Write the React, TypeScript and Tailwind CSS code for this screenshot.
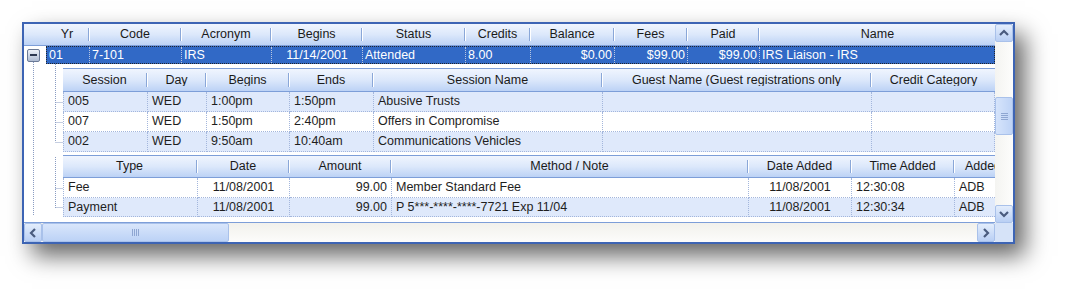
import React from 'react';

type Col = { label: string; w: string; align?: 'left' | 'right' | 'center' };

const MAIN_COLS: Col[] = [
  { label: 'Yr', w: 'w-[44px]' },
  { label: 'Code', w: 'w-[92px]' },
  { label: 'Acronym', w: 'w-[90px]' },
  { label: 'Begins', w: 'w-[91px]', align: 'center' },
  { label: 'Status', w: 'w-[103px]' },
  { label: 'Credits', w: 'w-[65px]' },
  { label: 'Balance', w: 'w-[84px]', align: 'right' },
  { label: 'Fees', w: 'w-[73px]', align: 'right' },
  { label: 'Paid', w: 'w-[72px]', align: 'right' },
  { label: 'Name', w: 'w-[235px]' },
];

const MAIN_ROW = ['01', '7-101', 'IRS', '11/14/2001', 'Attended', '8.00', '$0.00', '$99.00', '$99.00', 'IRS Liaison - IRS'];

const SESSION_COLS: Col[] = [
  { label: 'Session', w: 'w-[85px]' },
  { label: 'Day', w: 'w-[59px]' },
  { label: 'Begins', w: 'w-[83px]' },
  { label: 'Ends', w: 'w-[84px]' },
  { label: 'Session Name', w: 'w-[229px]' },
  { label: 'Guest Name (Guest registrations only', w: 'w-[269px]' },
  { label: 'Credit Category', w: 'w-[123px]' },
];

const SESSIONS = [
  ['005', 'WED', '1:00pm', '1:50pm', 'Abusive Trusts', '', ''],
  ['007', 'WED', '1:50pm', '2:40pm', 'Offers in Compromise', '', ''],
  ['002', 'WED', '9:50am', '10:40am', 'Communications Vehicles', '', ''],
];

const PAY_COLS: Col[] = [
  { label: 'Type', w: 'w-[135px]' },
  { label: 'Date', w: 'w-[92px]', align: 'center' },
  { label: 'Amount', w: 'w-[102px]', align: 'right' },
  { label: 'Method / Note', w: 'w-[357px]' },
  { label: 'Date Added', w: 'w-[103px]', align: 'center' },
  { label: 'Time Added', w: 'w-[103px]' },
  { label: 'Added By', w: 'w-[74px]' },
];

const PAYMENTS = [
  ['Fee', '11/08/2001', '99.00', 'Member Standard Fee', '11/08/2001', '12:30:08', 'ADB'],
  ['Payment', '11/08/2001', '99.00', 'P 5***-****-****-7721 Exp 11/04', '11/08/2001', '12:30:34', 'ADB'],
];

const alignClass = (a?: string) =>
  a === 'right' ? 'justify-end' : a === 'center' ? 'justify-center' : 'justify-start';

const HeaderRow = ({ cols, height, lead }: { cols: Col[]; height: string; lead?: boolean }) => (
  <div
    className={`flex shrink-0 ${height} bg-gradient-to-b from-[#f0f5fe] via-[#dce8fb] to-[#bcd2f5] border-b border-[#7d9ed8] text-[#1a1a1a]`}
  >
    {lead && <div className="w-[22px] shrink-0" />}
    {cols.map((c, i) => (
      <div key={i} className={`${c.w} shrink-0 flex items-center overflow-hidden`}>
        <span className="flex-1 text-center whitespace-nowrap overflow-hidden">{c.label}</span>
        {i < cols.length - 1 && (
          <span className="self-stretch my-[4px] w-[2px] shrink-0 border-l border-[#8aa7d8] border-r border-r-white" />
        )}
      </div>
    ))}
  </div>
);

const DataRow = ({ cols, cells, shaded, height }: { cols: Col[]; cells: string[]; shaded: boolean; height: string }) => (
  <div className={`flex shrink-0 ${height} ${shaded ? 'bg-[#dfe9fb]' : 'bg-white'} text-[#1e1e1e]`}>
    {cols.map((c, i) => (
      <div
        key={i}
        className={`${c.w} shrink-0 flex items-center px-[4px] whitespace-nowrap overflow-hidden border-b border-r border-dotted border-[#a3b6dc] ${
          i === 0 ? 'border-l' : ''
        } ${alignClass(c.align)}`}
      >
        {cells[i]}
      </div>
    ))}
  </div>
);

const Arrow = ({ dir }: { dir: 'up' | 'down' | 'left' | 'right' }) => {
  const pts = {
    up: '4,10 8,6 12,10',
    down: '4,6 8,10 12,6',
    left: '10,4 6,8 10,12',
    right: '6,4 10,8 6,12',
  }[dir];
  return (
    <svg width="16" height="16" viewBox="0 0 16 16">
      <polyline points={pts} fill="none" stroke="#4a5b7e" strokeWidth="2.2" />
    </svg>
  );
};

const ScrollButton = ({ dir, className }: { dir: 'up' | 'down' | 'left' | 'right'; className: string }) => (
  <div
    className={`${className} shrink-0 flex items-center justify-center rounded-[2px] border border-[#a9c1ea] bg-gradient-to-b from-[#e3edfc] to-[#b9cff4]`}
  >
    <Arrow dir={dir} />
  </div>
);

const TreeLines = () => (
  <svg className="absolute left-0 top-[22px] pointer-events-none" width="40" height="200">
    <g stroke="#8a9cc2" strokeWidth="1" strokeDasharray="1 1" fill="none">
      <line x1="9.5" y1="16" x2="9.5" y2="169" />
      <line x1="31.5" y1="18" x2="31.5" y2="96" />
      <line x1="31.5" y1="56.5" x2="39" y2="56.5" />
      <line x1="31.5" y1="76.5" x2="39" y2="76.5" />
      <line x1="31.5" y1="96.5" x2="39" y2="96.5" />
      <line x1="31.5" y1="111" x2="31.5" y2="162" />
      <line x1="31.5" y1="142.5" x2="39" y2="142.5" />
      <line x1="31.5" y1="161.5" x2="39" y2="161.5" />
    </g>
  </svg>
);

const ExpandBox = () => (
  <div className="ml-[3px] w-[13px] h-[13px] rounded-[2px] border border-[#6b7a96] bg-gradient-to-b from-[#eef2f8] to-[#aebbd2] flex items-center justify-center">
    <span className="block w-[7px] h-[2px] bg-[#2d3850]" />
  </div>
);

export default function App() {
  return (
    <div className="w-[1070px] h-[299px] bg-white pt-[22px] pl-[22px] font-['Liberation_Sans',Arial,sans-serif] text-[12.5px] leading-none">
      <div className="w-[993px] h-[222px] border-2 border-[#3d64b4] bg-white flex flex-col shadow-[10px_12px_22px_rgba(0,0,0,0.6)]">
        <div className="flex flex-1 min-h-0">
          {/* grid content */}
          <div className="relative w-[971px] flex flex-col overflow-hidden">
            <HeaderRow cols={MAIN_COLS} height="h-[22px]" lead />
            <div className="flex shrink-0 h-[18px]">
              <div className="w-[22px] shrink-0 flex items-center">
                <ExpandBox />
              </div>
              <div className="flex flex-1 bg-[#3169c6] text-white border border-dotted border-[#20242c]">
                {MAIN_COLS.map((c, i) => (
                  <div
                    key={i}
                    className={`${i === 0 ? 'w-[43px]' : i === MAIN_COLS.length - 1 ? 'flex-1' : c.w} shrink-0 flex items-center px-[2px] whitespace-nowrap overflow-hidden ${
                      i < MAIN_COLS.length - 1 ? 'border-r border-dotted border-[#b8c6e0]' : ''
                    } ${alignClass(c.align)}`}
                  >
                    {MAIN_ROW[i]}
                  </div>
                ))}
              </div>
            </div>
            <div className="h-[4px] shrink-0" />
            <div className="ml-[39px] flex flex-col border-t border-[#7d9ed8]">
              <HeaderRow cols={SESSION_COLS} height="h-[23px]" />
              {SESSIONS.map((r, i) => (
                <DataRow key={i} cols={SESSION_COLS} cells={r} shaded={i !== 1} height="h-[20px]" />
              ))}
            </div>
            <div className="h-[3px] shrink-0" />
            <div className="ml-[39px] flex flex-col border-t border-[#7d9ed8]">
              <HeaderRow cols={PAY_COLS} height="h-[22px]" />
              {PAYMENTS.map((r, i) => (
                <DataRow key={i} cols={PAY_COLS} cells={r} shaded={i === 1} height={i === 0 ? 'h-[20px]' : 'h-[19px]'} />
              ))}
            </div>
            <div className="flex-1 border-b border-[#7d9ed8]" />
            <TreeLines />
          </div>
          {/* vertical scrollbar */}
          <div className="w-[18px] flex flex-col bg-gradient-to-r from-[#f4f4f1] to-[#fdfdfc]">
            <ScrollButton dir="up" className="h-[18px]" />
            <div className="flex-1 flex flex-col">
              <div className="mt-[55px] h-[38px] rounded-[2px] border border-[#a9c1ea] bg-gradient-to-r from-[#d6e4fb] to-[#bed3f6] flex items-center justify-center">
                <div className="flex flex-col gap-[1px]">
                  <span className="block w-[7px] h-px bg-[#8ea6d2]" />
                  <span className="block w-[7px] h-px bg-[#8ea6d2]" />
                  <span className="block w-[7px] h-px bg-[#8ea6d2]" />
                  <span className="block w-[7px] h-px bg-[#8ea6d2]" />
                </div>
              </div>
            </div>
            <ScrollButton dir="down" className="h-[18px]" />
          </div>
        </div>
        {/* horizontal scrollbar */}
        <div className="h-[19px] shrink-0 flex">
          <div className="w-[971px] flex bg-gradient-to-b from-[#f2f1ec] to-[#fcfcfb]">
            <ScrollButton dir="left" className="w-[18px]" />
            <div className="w-[187px] rounded-[2px] border border-[#a9c1ea] bg-gradient-to-b from-[#d9e6fb] to-[#bcd2f6] flex items-center justify-center">
              <div className="flex gap-[1px]">
                <span className="block w-px h-[7px] bg-[#8ea6d2]" />
                <span className="block w-px h-[7px] bg-[#8ea6d2]" />
                <span className="block w-px h-[7px] bg-[#8ea6d2]" />
                <span className="block w-px h-[7px] bg-[#8ea6d2]" />
              </div>
            </div>
            <div className="flex-1" />
            <ScrollButton dir="right" className="w-[18px]" />
          </div>
          <div className="w-[18px] bg-[#d6e3f8]" />
        </div>
      </div>
    </div>
  );
}
